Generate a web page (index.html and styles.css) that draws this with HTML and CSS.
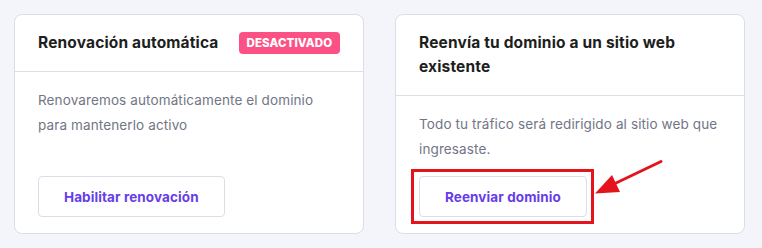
FILE: index.html
```html
<!DOCTYPE html>
<html lang="es">
<head>
<meta charset="utf-8">
<link rel="stylesheet" href="styles.css">
</head>
<body>
<div class="page">
  <section class="card">
    <header class="card-head">
      <h2 class="title title-single">Renovación automática</h2>
      <span class="badge">DESACTIVADO</span>
    </header>
    <div class="card-body">
      <p class="text">Renovaremos automáticamente el dominio para mantenerlo activo</p>
      <div class="actions">
        <button class="btn">Habilitar renovación</button>
      </div>
    </div>
  </section>
  <section class="card card-annotated">
    <header class="card-head">
      <h2 class="title">Reenvía tu dominio a un sitio web existente</h2>
    </header>
    <div class="card-body">
      <p class="text">Todo tu tráfico será redirigido al sitio web que ingresaste.</p>
      <div class="actions">
        <span class="highlight"><button class="btn">Reenviar dominio</button></span>
      </div>
    </div>
    <svg class="arrow" width="75" height="42" viewBox="0 0 75 42">
      <line x1="24" y1="27.5" x2="70" y2="5.5" stroke="#e3141b" stroke-width="3" stroke-linecap="round"/>
      <polygon points="4,37.5 21,19 29,36" fill="#e3141b"/>
    </svg>
  </section>
</div>
</body>
</html>
```

FILE: styles.css
```css
* { box-sizing: border-box; }
html, body {
  margin: 0;
  padding: 0;
  background: #f4f4fb;
}
body {
  font-family: Inter, "Noto Sans", "DejaVu Sans", sans-serif;
}
.page {
  display: flex;
  gap: 31px;
  padding: 14px;
}
.card {
  width: 350px;
  height: 220px;
  background: #ffffff;
  border: 1px solid #dcdde6;
  border-radius: 8px;
  display: flex;
  flex-direction: column;
}
.card-annotated { position: relative; }
.card-head {
  display: flex;
  align-items: center;
  gap: 20px;
  padding: 16px 22px 16px 23px;
  border-bottom: 1px solid #dcdde6;
}
.title {
  margin: 0;
  font-size: 15.5px;
  font-weight: 700;
  line-height: 24px;
  color: #1d1e20;
  letter-spacing: 0.15px;
}
.title-single {
  white-space: nowrap;
  flex-shrink: 0;
}
.badge {
  flex-shrink: 0;
  display: inline-flex;
  align-items: center;
  height: 22px;
  padding: 0 8px;
  border-radius: 4px;
  background: #fc5185;
  color: #ffffff;
  font-size: 11.5px;
  font-weight: 800;
  letter-spacing: 0.1px;
}
.card-body {
  flex: 1;
  display: flex;
  flex-direction: column;
  padding: 16px 24px 16px 23px;
}
.text {
  margin: 0;
  font-size: 13.5px;
  line-height: 25px;
  color: #727586;
  letter-spacing: 0.12px;
}
.actions {
  margin-top: auto;
  display: flex;
}
.highlight {
  position: relative;
  display: inline-flex;
}
.highlight::after {
  content: "";
  position: absolute;
  top: -7px;
  left: -8px;
  right: -7px;
  bottom: -7px;
  border: 3px solid #e3141b;
}
.btn {
  height: 41px;
  padding: 0 25px;
  background: #ffffff;
  border: 1px solid #dcdde6;
  border-radius: 4px;
  font-family: inherit;
  font-size: 13.5px;
  font-weight: 700;
  color: #673de6;
  letter-spacing: 0.1px;
}
.arrow {
  position: absolute;
  left: 195px;
  top: 141px;
}
```
